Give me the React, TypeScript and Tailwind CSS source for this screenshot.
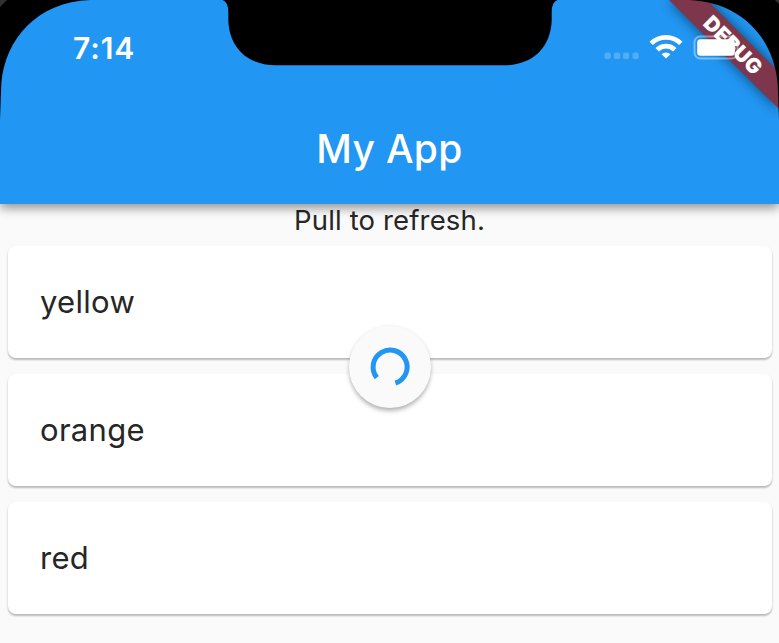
const barDots = [604.5, 614, 623, 632.5];
const cards = ["yellow", "orange", "red"];

function Banner() {
  return (
    <svg className="absolute inset-0 h-full w-full" viewBox="0 0 779 204">
      <defs>
        <filter id="soft" x="-40%" y="-40%" width="180%" height="180%">
          <feGaussianBlur stdDeviation="6.5" />
        </filter>
      </defs>
      <path d="M669 0H707L779 72V109Z" fill="#000" opacity=".55" filter="url(#soft)" />
      <path d="M669 0H707L779 72V109Z" fill="#7d364b" />
      <text
        x="733"
        y="52.4"
        transform="rotate(45 733 45)"
        textAnchor="middle"
        textLength="73"
        fontFamily="Inter, sans-serif"
        fontSize="20.8"
        fontWeight="900"
        fill="#fff"
      >
        DEBUG
      </text>
    </svg>
  );
}

function StatusIcons() {
  return (
    <svg className="absolute inset-0 h-full w-full" viewBox="0 0 779 204">
      {barDots.map((x) => (
        <rect key={x} x={x} y="52.5" width="6.2" height="6.5" rx="1.8" fill="#fff" opacity=".22" />
      ))}
      <g fill="none" stroke="#fff" strokeWidth="4.8">
        <path d="M651.2 43.4A21 21 0 0 1 680.8 43.4" />
        <path d="M657.2 49.7A12.4 12.4 0 0 1 674.8 49.7" />
      </g>
      <path d="M666 58.6L661.6 54.2A6.3 6.3 0 0 1 670.4 54.2Z" fill="#fff" />
      <rect x="694.5" y="36.5" width="43" height="22" rx="5.8" fill="none" stroke="#fff" strokeWidth="1.9" opacity=".4" />
      <rect x="697.2" y="39.2" width="37.6" height="16.6" rx="3.3" fill="#fff" />
    </svg>
  );
}

function Bezel() {
  return (
    <svg className="absolute inset-0 h-full w-full" viewBox="0 0 779 204">
      <path d="M0 0H90C38 2 5 38 1.3 84L0 120Z" fill="#000" />
      <path d="M779 0H689C741 2 774 38 777.7 84L779 120Z" fill="#000" />
      <path d="M222.5 0Q228.300 2 228.300 12V20C229 47 247 65.300 276 65.300H504C533 65.300 551 47 551.700 20V12Q551.700 2 557.500 0Z" fill="#000" />
      <path d="M0 0H7L0 7Z" fill="#303030" />
      <path d="M779 0H775L779 4Z" fill="#303030" />
    </svg>
  );
}

function Spinner() {
  return (
    <div className="absolute top-[326px] left-[349px] flex size-[82px] items-center justify-center rounded-full bg-[#fafafa] shadow-[0_4px_5px_-1px_rgba(0,0,0,0.25),0_1px_4px_rgba(0,0,0,0.12)]">
      <svg width="82" height="82" viewBox="0 0 82 82" fill="none">
        <path d="M27.8 51.6A17 17 0 1 1 46.4 57.2" stroke="#2196f3" strokeWidth="5" />
      </svg>
    </div>
  );
}

export default function App() {
  return (
    <div className="relative flex h-[643px] w-[779px] flex-col overflow-hidden bg-[#fafafa] font-['Inter',sans-serif] text-[#262626]">
      <header className="relative z-10 h-[204px] shrink-0 bg-[#2196f3] text-white shadow-[0_4px_10px_rgba(0,0,0,0.42)]">
        <div className="flex h-24 items-center pl-[73px]">
          <span className="text-[30px] leading-none font-semibold tracking-[0.9px]">7:14</span>
        </div>
        <h1 className="flex h-[106px] items-center justify-center text-[39px] font-medium tracking-[0.3px]">My App</h1>
        <Banner />
        <StatusIcons />
        <Bezel />
      </header>
      <main className="flex flex-col">
        <p className="flex h-[34px] items-center justify-center text-[27.5px] tracking-[0.15px]">Pull to refresh.</p>
        <ul className="flex flex-col gap-4 pt-2 pr-[7px] pl-2">
          {cards.map((name) => (
            <li
              key={name}
              className="flex h-28 items-center rounded-lg bg-white px-8 text-[31px] tracking-[0.3px] shadow-[0_2px_2px_rgba(0,0,0,0.22),0_1px_3px_rgba(0,0,0,0.08)]"
            >
              {name}
            </li>
          ))}
        </ul>
      </main>
      <Spinner />
    </div>
  );
}
